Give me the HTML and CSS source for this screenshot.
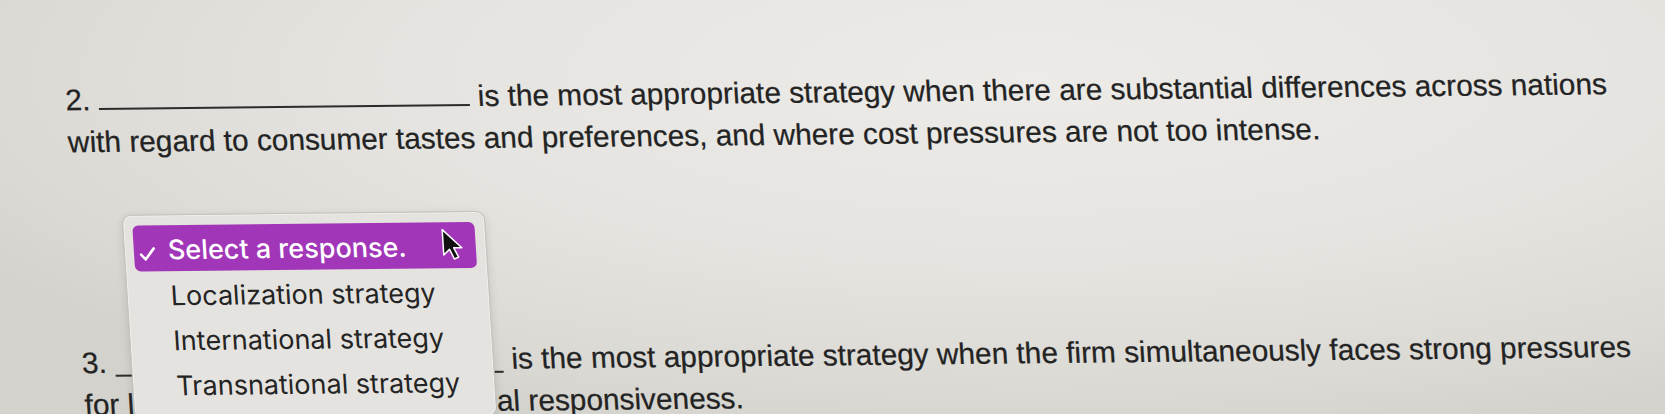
FILE: index.html
```html
<!DOCTYPE html>
<html lang="en">
<head>
<meta charset="utf-8">
<title>Global strategy questions</title>
<link rel="stylesheet" href="styles.css">
</head>
<body>
<main class="page">
  <p class="question"><span class="num">2.</span> <span class="blank blank-q2"></span> is the most appropriate strategy when there are substantial differences across nations with regard to consumer tastes and preferences, and where cost pressures are not too intense.</p>

  <div class="question-wrap">
    <p class="question"><span class="num">3.</span> <span class="blank blank-q3"></span> is the most appropriate strategy when the firm simultaneously faces strong pressures for lower cost and improved local responsiveness.</p>

    <div class="menu" role="listbox">
      <div class="item selected" role="option" aria-selected="true">
        <svg class="check" viewBox="0 0 17 15" aria-hidden="true"><polyline points="2,8.2 6.3,13 15,2" /></svg>
        <span>Select a response.</span>
      </div>
      <div class="item" role="option">Localization strategy</div>
      <div class="item" role="option">International strategy</div>
      <div class="item" role="option">Transnational strategy</div>
      <svg class="cursor" viewBox="0 0 17 26" aria-hidden="true"><path d="M1 1 L1 21 L5.8 16.6 L9.2 24.2 L12.6 22.8 L9.2 15.4 L15.6 15.4 Z" /></svg>
    </div>
  </div>
</main>
</body>
</html>
```
FILE: styles.css
```css
html, body {
  margin: 0;
  height: 100%;
  overflow: hidden;
}

body {
  background:
    radial-gradient(ellipse 75% 90% at 62% 18%, #ecebe7 0%, #e5e4e0 50%, #dad9d4 85%, #d3d2cd 100%);
  font-family: "Liberation Sans", Arial, sans-serif;
  color: #232323;
}

.page {
  box-sizing: border-box;
  width: 1632px;
  padding: 80px 0 0 59px;
  transform-origin: 0 0;
  transform: rotate(-0.6deg) skewX(3deg);
}

.question {
  margin: 0;
  font-size: 29.8px;
  line-height: 42px;
  -webkit-text-stroke: 0.25px #232323;
}

.blank {
  display: inline-block;
  height: 0;
  border-bottom: 2px solid #2c2c2c;
}

.blank-q2 {
  width: 371px;
}

.blank-q3 {
  width: 388px;
  vertical-align: -4px;
}

.question-wrap {
  position: relative;
  margin-top: 179px;
}

.menu {
  position: absolute;
  left: 49px;
  top: -127px;
  width: 342px;
  padding: 10px 10px 12px 9px;
  background: #e4e3df;
  border: 1px solid #c2c1bc;
  border-radius: 9px;
  box-shadow: 0 3px 10px rgba(0, 0, 0, 0.12), inset 0 0 0 1px rgba(255, 255, 255, 0.45);
  font-family: Inter, "Liberation Sans", sans-serif;
  font-size: 27px;
  color: #242424;
}

.item {
  position: relative;
  box-sizing: border-box;
  height: 45px;
  padding: 4px 0 0 34px;
  line-height: 41px;
  white-space: nowrap;
}

.item.selected {
  height: 46px;
  background: #a236b8;
  color: #ffffff;
  font-weight: 500;
  border-radius: 6px;
}

.check {
  position: absolute;
  left: 5px;
  top: 21px;
  width: 17px;
  height: 15px;
  fill: none;
  stroke: #ffffff;
  stroke-width: 2.6;
  stroke-linecap: round;
  stroke-linejoin: round;
}

.cursor {
  position: absolute;
  left: 317px;
  top: 16px;
  width: 22px;
  height: 33px;
  fill: #111111;
  stroke: #ffffff;
  stroke-width: 1.2;
  stroke-linejoin: round;
}
```
